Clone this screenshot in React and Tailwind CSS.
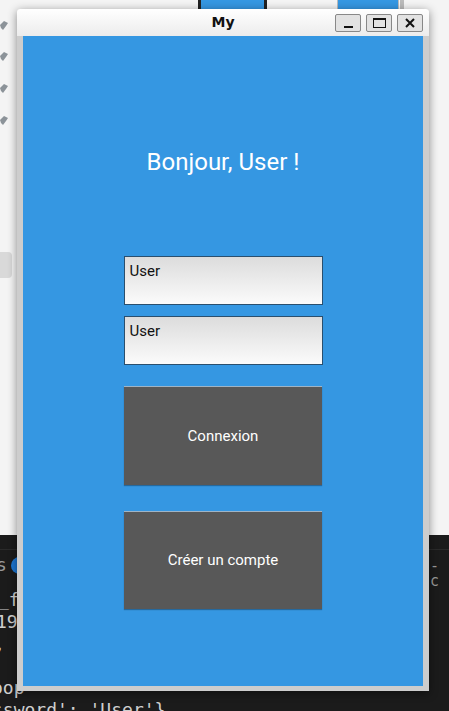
import React from 'react';

const Pin = ({ top }) => (
  <div className="absolute left-0" style={{ top }}>
    <svg width="9" height="10" viewBox="0 0 9 10">
      <path d="M0 4 L4 0 L8 2 L6 5 L3 9 L1 7 Z" fill="#8c9399" />
    </svg>
  </div>
);

export default function App() {
  return (
    <div className="relative w-[449px] h-[711px] overflow-hidden bg-[#f4f4f4]" style={{ fontFamily: 'Roboto, "Noto Sans", sans-serif' }}>
      {/* fond : document derrière */}
      <div className="absolute left-[198px] top-0 w-[69px] h-[10px] bg-[#222] px-[3px]">
        <div className="h-full bg-[#3597e2]" />
      </div>
      <div className="absolute left-[337px] top-0 w-[62px] h-[10px] bg-[#3597e2] border-x border-[#bbb]" />
      <div className="absolute left-[400px] top-0 w-[4px] h-[10px] bg-[#bbb]" />
      <Pin top={21} />
      <Pin top={52} />
      <Pin top={84} />
      <Pin top={116} />
      <div className="absolute left-0 top-[252px] w-[12px] h-[26px] bg-[#d9d9d9] rounded-r-sm" />

      {/* fond : éditeur sombre */}
      <div className="absolute left-0 top-[535px] w-full h-[176px] bg-[#1b1b1b] text-[#cfcfcf] text-[18px] leading-none" style={{ fontFamily: '"DejaVu Sans Mono", monospace' }}>
        <div className="absolute left-0 top-[14px] w-full h-px bg-[#2a2a2a]" />
        <div className="absolute left-[-4px] top-[21px] flex items-center gap-1 text-[#9a9a9a]">
          <span>s</span>
          <span className="inline-block w-[17px] h-[17px] rounded-full bg-[#1d76d2]" />
        </div>
        <div className="absolute left-[430px] top-[24px] text-[#9a9a9a] text-[15px]">- c</div>
        <div className="absolute left-[-2px] top-[56px]">_fr</div>
        <div className="absolute left-[-4px] top-[78px]">195</div>
        <div className="absolute left-[-6px] top-[101px]">, '</div>
        <div className="absolute left-[-8px] top-[144px]">oop</div>
        <div className="absolute left-[-8px] top-[166px]">ssword': 'User'}</div>
      </div>

      {/* fenêtre */}
      <div className="absolute left-[17px] top-[9px] w-[412px] h-[682px] flex flex-col bg-[#cdcdcd] shadow-[0_2px_10px_rgba(0,0,0,0.45)] rounded-t-[3px]">
        <div className="relative h-[27px] shrink-0 flex items-center justify-center bg-gradient-to-b from-white to-[#ececec] rounded-t-[3px]">
          <span className="text-[14px] font-bold text-[#111] mt-[-1px]" style={{ fontFamily: '"DejaVu Sans", sans-serif' }}>My</span>
          <div className="absolute right-[6px] top-[5px] flex gap-[5px]">
            <div className="w-[26px] h-[18px] border border-[#888] bg-[#e2e2e2] rounded-[2px] flex items-end justify-center pb-[3px]">
              <div className="w-[9px] h-[2px] bg-[#111]" />
            </div>
            <div className="w-[26px] h-[18px] border border-[#888] bg-[#e2e2e2] rounded-[2px] flex items-center justify-center">
              <div className="w-[13px] h-[10px] border border-[#111] border-t-2" />
            </div>
            <div className="w-[26px] h-[18px] border border-[#888] bg-[#e2e2e2] rounded-[2px] flex items-center justify-center">
              <svg width="10" height="10" viewBox="0 0 10 10">
                <path d="M1 1 L9 9 M9 1 L1 9" stroke="#111" strokeWidth="2" />
              </svg>
            </div>
          </div>
        </div>

        <div className="mx-[6px] mb-[5px] flex-1 bg-[#3597e2] flex flex-col items-center">
          <div className="mt-[111px] h-[30px] leading-[30px] text-[24px] text-white">Bonjour, User !</div>

          <div className="mt-[79px] w-[199px] h-[49px] border border-[#2a4f6e] bg-gradient-to-b from-[#dcdcdc] to-[#fbfbfb] px-[5px] pt-[5px] text-[15px] leading-[18px] text-[#111]">User</div>
          <div className="mt-[11px] w-[199px] h-[49px] border border-[#2a4f6e] bg-gradient-to-b from-[#dcdcdc] to-[#fbfbfb] px-[5px] pt-[5px] text-[15px] leading-[18px] text-[#111]">User</div>

          <button className="mt-[21px] w-[198px] h-[99px] bg-[#585858] border-t border-[#9fb4c6] text-white text-[15px] shadow-[0_1px_1px_rgba(0,0,0,0.3)]">Connexion</button>
          <button className="mt-[26px] w-[198px] h-[98px] bg-[#585858] border-t border-[#9fb4c6] text-white text-[15px] shadow-[0_1px_1px_rgba(0,0,0,0.3)]">Créer un compte</button>
        </div>
      </div>
    </div>
  );
}
